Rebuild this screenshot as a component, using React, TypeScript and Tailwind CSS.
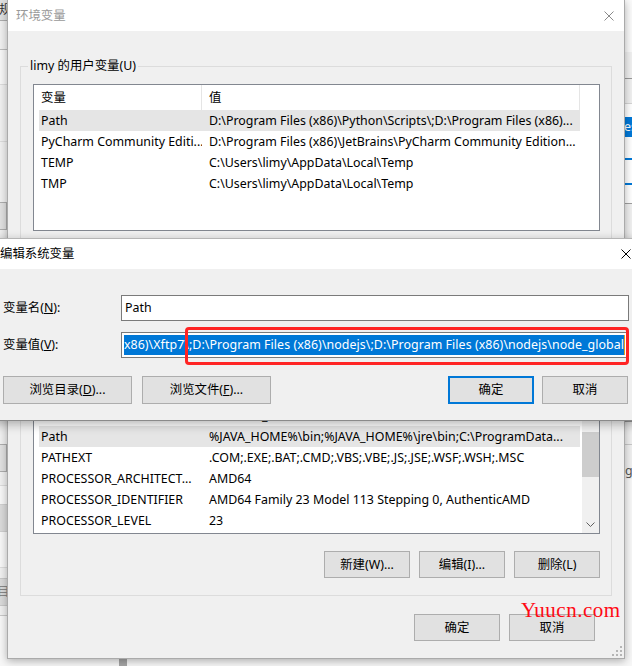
import React from "react";

const userRows: [string, string, boolean?][] = [
  ["Path", "D:\\Program Files (x86)\\Python\\Scripts\\;D:\\Program Files (x86)...", true],
  ["PyCharm Community Editi...", "D:\\Program Files (x86)\\JetBrains\\PyCharm Community Edition..."],
  ["TEMP", "C:\\Users\\limy\\AppData\\Local\\Temp"],
  ["TMP", "C:\\Users\\limy\\AppData\\Local\\Temp"],
];

const sysRows: [string, string, boolean?][] = [
  ["ComSpec", "C:\\WINDOWS\\system32\\cmd.exe"],
  ["DriverData", "C:\\Windows\\System32\\Drivers\\DriverData"],
  ["NUMBER_OF_PROCESSORS", "16"],
  ["OS", "Windows_NT"],
  ["Path", "%JAVA_HOME%\\bin;%JAVA_HOME%\\jre\\bin;C:\\ProgramData...", true],
  ["PATHEXT", ".COM;.EXE;.BAT;.CMD;.VBS;.VBE;.JS;.JSE;.WSF;.WSH;.MSC"],
  ["PROCESSOR_ARCHITECT...", "AMD64"],
  ["PROCESSOR_IDENTIFIER", "AMD64 Family 23 Model 113 Stepping 0, AuthenticAMD"],
  ["PROCESSOR_LEVEL", "23"],
];

function Row({ name, value, sel }: { name: string; value: string; sel?: boolean }) {
  return (
    <div className={`flex h-[21px] shrink-0 items-center ml-[5px] w-[541px] ${sel ? "bg-[#e5e5e5]" : ""}`}>
      <div className="w-[163px] pl-[2px] whitespace-nowrap overflow-hidden">{name}</div>
      <div className="w-[378px] pl-[7px] whitespace-nowrap overflow-hidden">{value}</div>
    </div>
  );
}

function Header() {
  return (
    <div className="flex h-[25px] shrink-0 items-center bg-white">
      <div className="w-[168px] h-full flex items-center pl-[7px] border-r border-[#e5e5e5]">变量</div>
      <div className="w-[378px] h-full flex items-center pl-[7px] border-r border-[#e5e5e5]">值</div>
    </div>
  );
}

function Btn({
  children,
  className = "",
  primary = false,
}: {
  children: React.ReactNode;
  className?: string;
  primary?: boolean;
}) {
  return (
    <div
      className={`flex items-center justify-center shrink-0 bg-[#e1e1e1] whitespace-nowrap ${
        primary ? "border-2 border-[#0078d7]" : "border border-[#adadad]"
      } ${className}`}
    >
      {children}
    </div>
  );
}

function XIcon({ color }: { color: string }) {
  return (
    <svg width="10" height="10" viewBox="0 0 10 10" className="shrink-0">
      <path d="M0.5 0.5 L9.5 9.5 M9.5 0.5 L0.5 9.5" stroke={color} strokeWidth="1" fill="none" />
    </svg>
  );
}

export default function App() {
  const valueText =
    "Files (x86)\\Xftp7\\;D:\\Program Files (x86)\\nodejs\\;D:\\Program Files (x86)\\nodejs\\node_global";
  return (
    <div className="relative w-[632px] h-[666px] overflow-hidden bg-[#f0f0f0] text-[12.4px] leading-[16px] text-black font-['Noto_Sans','Noto_Sans_CJK_SC',sans-serif]">
      {/* background window */}
      <div className="absolute inset-0 flex">
        {/* left strip */}
        <div className="w-[7px] h-full flex flex-col shrink-0 overflow-hidden">
          <div className="h-[21px] shrink-0 bg-[#e1e1e1] border-b border-[#adadad] flex items-center text-[#333] -ml-[1px] whitespace-nowrap">
            规划
          </div>
          <div className="h-[29px] shrink-0 bg-[#f0f0f0] border-b border-[#bcbcbc]" />
          <div className="h-[35px] shrink-0 bg-[#f7f7f7] border-b border-[#dcdcdc]" />
          <div className="h-[57px] shrink-0 bg-[#f0f0f0] border-b border-[#dcdcdc]" />
          <div className="h-[60px] shrink-0 bg-[#f0f0f0]" />
          <div className="h-[28px] shrink-0 bg-[#e1e1e1] border border-l-0 border-[#adadad]" />
          <div className="h-[214px] shrink-0 bg-[#f0f0f0]" />
          <div className="h-[28px] shrink-0 bg-[#e1e1e1] border border-l-0 border-[#adadad]" />
          <div className="h-[14px] shrink-0 bg-[#f0f0f0] border-b border-[#dcdcdc]" />
          <div className="h-[18px] shrink-0 bg-[#f7f7f7]" />
          <div className="h-[28px] shrink-0 bg-[#dadada] border-y border-[#cfcfcf]" />
          <div className="h-[36px] shrink-0 bg-[#f7f7f7] border-b border-[#dcdcdc]" />
          <div className="h-[10px] shrink-0 bg-[#f0f0f0]" />
          <div className="h-[28px] shrink-0 bg-[#dadada] border-y border-[#c8c8c8] flex items-center text-[#888] -ml-[3px] whitespace-nowrap">
            目(
          </div>
          <div className="h-[10px] shrink-0 bg-[#f0f0f0] border-b border-[#c8c8c8]" />
          <div className="flex-1 bg-[#f7f7f7]" />
        </div>
        {/* middle column */}
        <div className="w-[618px] h-full flex flex-col shrink-0">
          <div className="h-[659px] shrink-0" />
          <div className="flex-1 bg-[#f7f7f7] flex">
            <div className="w-[112px] shrink-0" />
            <div className="w-[8px] h-full bg-[#a5a5a5]" />
          </div>
        </div>
        {/* right strip */}
        <div className="w-[7px] h-full flex flex-col shrink-0 overflow-hidden">
          <div className="h-[52px] shrink-0 bg-[#fafafa]" />
          <div className="h-[27px] shrink-0 bg-[#f0f0f0] border-b border-[#9a9a9a]" />
          <div className="h-[25px] shrink-0 bg-[#f0f0f0] border-b border-[#d5d5d5]" />
          <div className="h-[13px] shrink-0 bg-white" />
          <div className="h-[20px] shrink-0 bg-[#0078d7] text-white flex items-center -ml-[1px] whitespace-nowrap">
            es
          </div>
          <div className="h-[21px] shrink-0 bg-white" />
          <div className="h-[2px] shrink-0 bg-[#0078d7]" />
          <div className="h-[23px] shrink-0 bg-white" />
          <div className="h-[2px] shrink-0 bg-[#0078d7]" />
          <div className="h-[19px] shrink-0 bg-white border-b border-[#a0a0a0]" />
          <div className="h-[218px] shrink-0 bg-[#f0f0f0] border-b border-[#a0a0a0]" />
          <div className="h-[23px] shrink-0 bg-[#f0f0f0] border-b border-[#c8c8c8]" />
          <div className="h-[34px] shrink-0 bg-[#f0f0f0] flex items-end text-[#555] whitespace-nowrap">
            gr
          </div>
          <div className="flex-1 bg-[#f7f7f7]" />
        </div>
      </div>

      {/* environment variables dialog */}
      <div className="absolute left-[7px] top-0 w-[618px] h-[659px] flex flex-col bg-[#f0f0f0] border-x border-b border-[#aaaaaa] shadow-[0_2px_8px_rgba(0,0,0,0.3)]">
        <div className="h-[31px] shrink-0 bg-white flex items-center justify-between pl-[8px] pr-[10px] text-[#999999]">
          <span>环境变量</span>
          <XIcon color="#8a8a8a" />
        </div>
        <div className="flex flex-col pl-[12px]">
          {/* user group */}
          <div className="mt-[35px] w-[592px] border border-[#dcdcdc] flex flex-col pb-[10px]">
            <div className="-mt-[9px] ml-[7px] px-[2px] w-fit bg-[#f0f0f0] leading-[16px]">limy 的用户变量(U)</div>
            <div className="mt-[10px] ml-[12px] w-[567px] h-[147px] border border-[#828790] bg-white flex flex-col overflow-hidden">
              <Header />
              {userRows.map(([n, v, s]) => (
                <Row key={n} name={n} value={v} sel={s} />
              ))}
            </div>
            <div className="mt-[10px] h-[27px] flex justify-end gap-[9px] pr-[11px]">
              <Btn className="w-[86px] h-[27px]">新建(N)...</Btn>
              <Btn className="w-[86px] h-[27px]">编辑(E)...</Btn>
              <Btn className="w-[86px] h-[27px]">删除(D)</Btn>
            </div>
          </div>
          {/* system group */}
          <div className="mt-[18px] w-[592px] border border-[#dcdcdc] flex flex-col pb-[17px]">
            <div className="-mt-[9px] ml-[7px] px-[2px] w-fit bg-[#f0f0f0] leading-[16px]">系统变量(S)</div>
            <div className="mt-[11px] ml-[12px] w-[567px] h-[218px] border border-[#828790] bg-white flex overflow-hidden">
              <div className="flex-1 flex flex-col overflow-hidden">
                <Header />
                {sysRows.map(([n, v, s]) => (
                  <Row key={n} name={n} value={v} sel={s} />
                ))}
              </div>
              <div className="w-[17px] shrink-0 flex flex-col bg-[#f0f0f0]">
                <div className="h-[17px] shrink-0 flex items-center justify-center">
                  <svg width="9" height="5" viewBox="0 0 9 5">
                    <path d="M0.5 4.5 L4.5 0.5 L8.5 4.5" stroke="#606060" fill="none" />
                  </svg>
                </div>
                <div className="h-[98px] shrink-0" />
                <div className="h-[45px] shrink-0 bg-[#cdcdcd]" />
                <div className="flex-1" />
                <div className="h-[17px] shrink-0 flex items-center justify-center">
                  <svg width="9" height="5" viewBox="0 0 9 5">
                    <path d="M0.5 0.5 L4.5 4.5 L8.5 0.5" stroke="#606060" fill="none" />
                  </svg>
                </div>
              </div>
            </div>
            <div className="mt-[17px] h-[27px] flex justify-end gap-[9px] pr-[11px]">
              <Btn className="w-[86px] h-[27px]">新建(W)...</Btn>
              <Btn className="w-[86px] h-[27px]">编辑(I)...</Btn>
              <Btn className="w-[86px] h-[27px]">删除(L)</Btn>
            </div>
          </div>
        </div>
        <div className="mt-[18px] flex justify-end gap-[9px] pr-[29px]">
          <Btn className="w-[86px] h-[27px]">确定</Btn>
          <Btn className="w-[86px] h-[27px]">取消</Btn>
        </div>
        <svg width="12" height="12" viewBox="0 0 12 12" className="absolute right-[1px] bottom-[1px]">
          <rect x="9" y="1" width="2" height="2" fill="#b5b5b5" />
          <rect x="9" y="5" width="2" height="2" fill="#b5b5b5" />
          <rect x="5" y="5" width="2" height="2" fill="#b5b5b5" />
          <rect x="9" y="9" width="2" height="2" fill="#b5b5b5" />
          <rect x="5" y="9" width="2" height="2" fill="#b5b5b5" />
          <rect x="1" y="9" width="2" height="2" fill="#b5b5b5" />
        </svg>
      </div>

      {/* edit system variable dialog */}
      <div className="absolute left-[-10px] top-[238px] w-[652px] h-[183px] flex flex-col bg-[#f0f0f0] border-t border-b border-t-[#b5b5b5] border-b-[#8a8a8a] shadow-[0_3px_10px_rgba(0,0,0,0.3)]">
        <div className="h-[30px] shrink-0 bg-white flex items-center justify-between pl-[10px] pr-[11px]">
          <span>编辑系统变量</span>
          <XIcon color="#000000" />
        </div>
        <div className="flex flex-col pt-[26px] pl-[13px]">
          <div className="flex items-center h-[26px]">
            <div className="w-[118px] shrink-0">
              变量名(<span className="underline">N</span>):
            </div>
            <div className="w-[508px] h-[26px] shrink-0 border border-[#7a7a7a] bg-white flex items-center pl-[3px]">
              Path
            </div>
          </div>
          <div className="flex items-center h-[26px] mt-[11px]">
            <div className="w-[118px] shrink-0">
              变量值(<span className="underline">V</span>):
            </div>
            <div className="w-[508px] h-[26px] shrink-0 border border-[#7a7a7a] bg-white p-[2px] flex">
              <div className="flex-1 flex justify-end overflow-hidden">
                <span className="bg-[#0078d7] text-white whitespace-nowrap leading-[20px] shrink-0 tracking-[0.06px]">
                  {valueText}
                </span>
                <span className="w-[1px] h-[20px] bg-[#e0a020] shrink-0 mr-[1px]" />
              </div>
            </div>
          </div>
          <div className="flex mt-[18px] h-[28px]">
            <Btn className="w-[129px] h-[28px]">
              浏览目录(<span className="underline">D</span>)...
            </Btn>
            <Btn className="w-[129px] h-[28px] ml-[10px]">
              浏览文件(<span className="underline">F</span>)...
            </Btn>
            <Btn primary className="w-[86px] h-[28px] ml-[177px]">
              确定
            </Btn>
            <Btn className="w-[86px] h-[28px] ml-[8px]">取消</Btn>
          </div>
        </div>
        <div className="absolute left-[195px] top-[88px] w-[444px] h-[38px] border-[3px] border-[#ff2424] rounded-[4px]" />
      </div>

      {/* watermark */}
      <div className="absolute left-[521px] top-[598px] text-[21px] leading-[24px] text-[#ff0a14] font-['Liberation_Serif',serif] tracking-[0.5px]">
        Yuucn.com
      </div>
    </div>
  );
}
